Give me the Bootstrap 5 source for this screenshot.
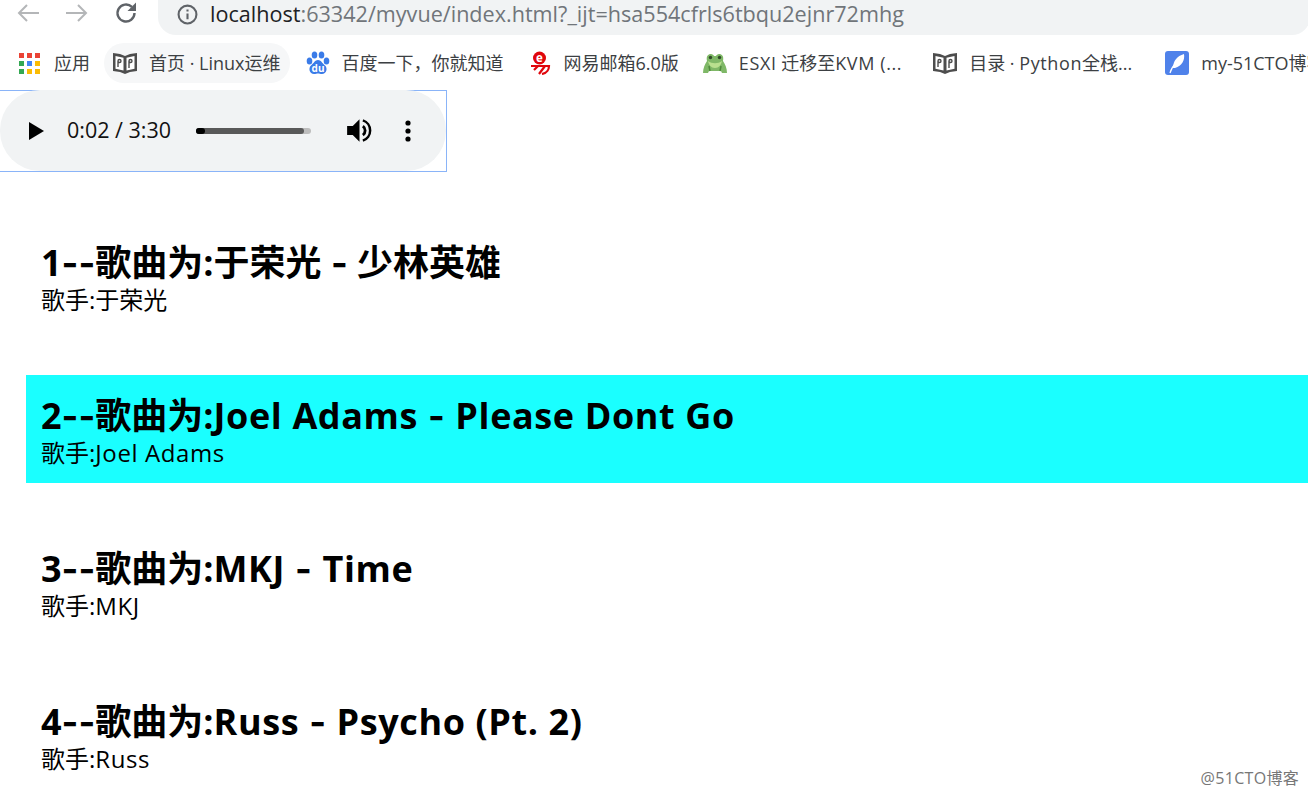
<!DOCTYPE html>
<html lang="zh-CN">
<head>
    <meta charset="UTF-8">
    <meta name="viewport" content="width=device-width, initial-scale=1.0">
    <title>myvue</title>
    <link href="https://cdn.jsdelivr.net/npm/bootstrap@5.3.0/dist/css/bootstrap.min.css" rel="stylesheet">
    <style>
        html, body { height: 794px; overflow: hidden; }
        body { font-family: "Open Sans", "Noto Sans CJK SC", sans-serif; background: #fff; color: #000; position: relative; }
        .top-strip { height: 35px; padding-left: 16px; }
        .tool-icon { width: 24px; height: 24px; margin: 1px 25px 0 0; flex: none; }
        .tool-reload { margin-right: 20px; }
        .url-pill { width: 1152px; height: 35px; background: #f1f3f4; border-radius: 0 0 18px 18px; padding: 0 0 7px 19px; font-size: 21.6px; color: #70757a; flex: none; white-space: nowrap; }
        .url-pill b { font-weight: 400; color: #202124; }
        .url-info { width: 21px; height: 21px; margin-right: 12px; flex: none; }
        .marks-strip { height: 55px; padding: 1px 0 0 18px; font-size: 18px; color: #3c4043; white-space: nowrap; overflow: hidden; }
        .mark-item { height: 40px; flex: none; }
        .mark-item svg { width: 24px; height: 24px; flex: none; margin-right: 12px; }
        .mark-home { background: #f6f7f8; border-radius: 20px; padding: 0 9px; margin: 0 16px 0 14px; }
        .gap-baidu { margin-right: 24px; }
        .gap-mail { margin-right: 24px; }
        .gap-frog { margin-right: 31px; }
        .gap-book { margin-right: 33px; }
        .player-box { width: 447px; height: 82px; border: 1px solid #8ab4f8; border-left: 0; }
        .player-pill { width: 446px; height: 81px; margin-top: -1px; background: #f1f3f4; border-radius: 40px; padding-left: 28px; font-size: 21.5px; color: #111; }
        .play-icon { width: 16px; height: 18px; margin-right: 23px; flex: none; }
        .seek-track { width: 115px; height: 6px; border-radius: 3px; background: #bdbdbd; margin-left: 25px; position: relative; flex: none; }
        .seek-fill { height: 6px; background: #595959; border-radius: 3px; }
        .seek-dot { width: 9px; height: 6px; background: #000; border-radius: 3px; position: absolute; left: 0; top: 0; }
        .volume-icon { width: 27px; height: 27px; margin-left: 35px; flex: none; }
        .more-icon { width: 6px; height: 22px; margin-left: 32px; flex: none; }
        .song-list { margin: 50px 0 0 26px; padding: 0; list-style: none; gap: 45px; }
        .song-row { height: 108px; padding: 18px 15px 0; }
        .song-active { background: #1affff; }
        .song-title { font-size: 36px; font-weight: 700; line-height: 46px; margin: 0; white-space: nowrap; }
        .wide-dash { font-family: Inter, sans-serif; }
        .song-artist { font-size: 24px; line-height: 28px; margin: 0; white-space: nowrap; }
        .latin-run { display: inline-block; letter-spacing: .6px; }
        .stamp { position: absolute; right: 9px; top: 766px; font-size: 16px; letter-spacing: .3px; color: #777; }
    </style>
</head>
<body>
    <div class="top-strip d-flex align-items-start">
        <svg class="tool-icon" viewBox="0 0 24 24" fill="none" stroke="#b4b6b8" stroke-width="2"><path d="M23 12H3M11 4l-8 8 8 8"/></svg>
        <svg class="tool-icon" viewBox="0 0 24 24" fill="none" stroke="#b4b6b8" stroke-width="2"><path d="M1 12h20M13 4l8 8-8 8"/></svg>
        <svg class="tool-icon tool-reload" viewBox="0 0 24 24" fill="none" stroke="#5f6368" stroke-width="2.400"><path d="M20.500 12a8.500 8.500 0 1 1-2.600-6.100"/><path d="M22 1.500v8.500h-8.500" fill="#5f6368" stroke="none"/></svg>
        <div class="url-pill d-flex align-items-center">
            <svg class="url-info" viewBox="0 0 20 20" fill="none" stroke="#5f6368" stroke-width="2"><circle cx="10" cy="10" r="8.500"/><path d="M10 9v5.500M10 5.200v2"/></svg>
            <span><b>localhost</b>:63342/myvue/index.html?_ijt=hsa554cfrls6tbqu2ejnr72mhg</span>
        </div>
    </div>

    <div class="marks-strip d-flex align-items-center">
        <div class="mark-item d-flex align-items-center">
            <svg viewBox="0 0 24 24"><g fill="#ea4335"><rect x="1" y="2" width="5" height="5"/><rect x="9" y="2" width="5" height="5"/><rect x="17" y="2" width="5" height="5"/></g><rect x="1" y="10" width="5" height="5" fill="#34a853"/><rect x="9" y="10" width="5" height="5" fill="#4285f4"/><rect x="17" y="10" width="5" height="5" fill="#fbbc04"/><rect x="1" y="18" width="5" height="5" fill="#34a853"/><rect x="9" y="18" width="5" height="5" fill="#fbbc04"/><rect x="17" y="18" width="5" height="5" fill="#fbbc04"/></svg>
            <span>应用</span>
        </div>
        <div class="mark-item mark-home d-flex align-items-center">
            <svg viewBox="0 0 24 24"><path d="M0 2l7 1 5 2 5-2 7-1v18l-7 1-5 2-5-2-7-1z" fill="#4d4d4d"/><path d="M2.500 5l8 1.800v12.700l-8-1.800zM21.500 5l-8 1.800v12.700l8-1.800z" fill="#fff"/><path d="M5 16V10a1.500 1.500 0 0 1 3 0 1.500 1.500 0 0 1-3 0M16 17v-7a1.500 1.500 0 0 1 3 0 1.500 1.500 0 0 1-3 0" fill="none" stroke="#4d4d4d" stroke-width="1.400"/></svg>
            <span>首页 · Linux运维</span>
        </div>
        <div class="mark-item gap-baidu d-flex align-items-center">
            <svg viewBox="0 0 24 24"><g fill="#3a7be8"><ellipse cx="3.500" cy="10" rx="2.800" ry="3.600"/><ellipse cx="8.500" cy="4" rx="2.800" ry="3.600"/><ellipse cx="15.500" cy="4" rx="2.800" ry="3.600"/><ellipse cx="20.500" cy="10" rx="2.800" ry="3.600"/><path d="M12 9c3 0 4 3 7 5.500s1.500 8.500-3 8.500c-1.500 0-3-.5-4-.5s-2.500.5-4 .5c-4.500 0-6-6-3-8.500S9 9 12 9z"/></g><text x="12" y="20.500" text-anchor="middle" font-size="10" font-weight="700" fill="#fff" font-family="Open Sans, sans-serif">du</text></svg>
            <span>百度一下，你就知道</span>
        </div>
        <div class="mark-item gap-mail d-flex align-items-center">
            <svg viewBox="0 0 24 24"><circle cx="11.500" cy="7" r="6.500" fill="#e0060c"/><text x="11.500" y="11" text-anchor="middle" font-size="11.500" font-weight="700" fill="#fff" font-family="Open Sans, sans-serif">e</text><path d="M3 15h7l-4 4M9 15h8l-6 8M15 15h6c0 3-2 7-7 8" fill="none" stroke="#e0060c" stroke-width="2.200"/></svg>
            <span>网易邮箱6.0版</span>
        </div>
        <div class="mark-item gap-frog d-flex align-items-center">
            <svg viewBox="0 0 24 24"><path d="M0 22c0-5 2-9 4-12C3 5 5 3 8 3c1.500 0 2.500 1 3 2h2c.5-1 1.500-2 3-2 3 0 5 2 4 7 2 3 4 7 4 12h-5l-1-2H6l-1 2z" fill="#7fb867"/><circle cx="7.500" cy="6.500" r="1.700" fill="#2f4a28"/><circle cx="16.500" cy="6.500" r="1.700" fill="#2f4a28"/><path d="M5 10c4 3 10 3 14 0-1 4-3 7-7 7s-6-3-7-7z" fill="#b9e08f"/><path d="M6 15l1 5M18 15l-1 5" stroke="#4f8a3c" stroke-width="1.500"/></svg>
            <span><span class="latin-run">ESXI</span> 迁移至<span class="latin-run">KVM (...</span></span>
        </div>
        <div class="mark-item gap-book d-flex align-items-center">
            <svg viewBox="0 0 24 24"><path d="M0 2l7 1 5 2 5-2 7-1v18l-7 1-5 2-5-2-7-1z" fill="#4d4d4d"/><path d="M2.500 5l8 1.800v12.700l-8-1.800zM21.500 5l-8 1.800v12.700l8-1.800z" fill="#fff"/><path d="M5 16V10a1.500 1.500 0 0 1 3 0 1.500 1.500 0 0 1-3 0M16 17v-7a1.500 1.500 0 0 1 3 0 1.500 1.500 0 0 1-3 0" fill="none" stroke="#4d4d4d" stroke-width="1.400"/></svg>
            <span>目录 · <span class="latin-run">Python</span>全栈...</span>
        </div>
        <div class="mark-item d-flex align-items-center">
            <svg viewBox="0 0 24 24"><rect width="24" height="24" rx="3" fill="#4f82ea"/><path d="M8 17C8 10 12 5 19 3c1 6-2 12-9 14z" fill="#fff"/><path d="M5 22c1-4 3-7 6-10" stroke="#fff" stroke-width="1.200" fill="none"/></svg>
            <span>my-51CTO博客</span>
        </div>
    </div>

    <div class="player-box">
        <div class="player-pill d-flex align-items-center">
            <svg class="play-icon" viewBox="0 0 16 18"><path d="M1 0l15 9-15 9z" fill="#000"/></svg>
            <span>0:02 / 3:30</span>
            <div class="seek-track"><div class="seek-fill" style="width:94%"></div><div class="seek-dot"></div></div>
            <svg class="volume-icon" viewBox="0 0 24 24"><path d="M1 8v8h5l6 6V2L6 8z" fill="#000"/><path d="M15 8a5 5 0 0 1 0 8" fill="none" stroke="#000" stroke-width="2.500"/><path d="M15 3a9.500 9.500 0 0 1 0 18" fill="none" stroke="#000" stroke-width="2.200"/></svg>
            <svg class="more-icon" viewBox="0 0 6 22"><circle cx="3" cy="3" r="2.600"/><circle cx="3" cy="11" r="2.600"/><circle cx="3" cy="19" r="2.600"/></svg>
        </div>
    </div>

    <ul class="song-list d-flex flex-column">
        <li class="song-row">
            <h2 class="song-title">1<span class="wide-dash">--</span>歌曲为:于荣光 <span class="wide-dash">-</span> 少林英雄</h2>
            <p class="song-artist">歌手:于荣光</p>
        </li>
        <li class="song-row song-active">
            <h2 class="song-title">2<span class="wide-dash">--</span>歌曲为:<span class="latin-run">Joel Adams <span class="wide-dash">-</span> Please Dont Go</span></h2>
            <p class="song-artist">歌手:<span class="latin-run">Joel Adams</span></p>
        </li>
        <li class="song-row">
            <h2 class="song-title">3<span class="wide-dash">--</span>歌曲为:<span class="latin-run">MKJ <span class="wide-dash">-</span> Time</span></h2>
            <p class="song-artist">歌手:<span class="latin-run">MKJ</span></p>
        </li>
        <li class="song-row">
            <h2 class="song-title">4<span class="wide-dash">--</span>歌曲为:<span class="latin-run">Russ <span class="wide-dash">-</span> Psycho (Pt. 2)</span></h2>
            <p class="song-artist">歌手:<span class="latin-run">Russ</span></p>
        </li>
    </ul>

    <div class="stamp">@51CTO博客</div>

    <script src="https://cdn.jsdelivr.net/npm/bootstrap@5.3.0/dist/js/bootstrap.bundle.min.js"></script>
</body>
</html>
